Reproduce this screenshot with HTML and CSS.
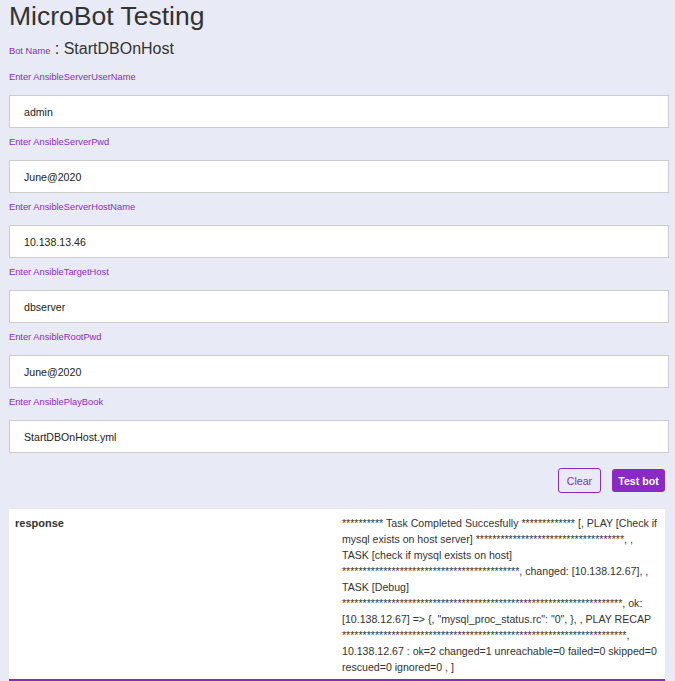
FILE: index.html
```html
<!DOCTYPE html>
<html lang="en">
<head>
<meta charset="utf-8">
<title>MicroBot Testing</title>
<link rel="stylesheet" href="styles.css">
</head>
<body>
<main class="page">
  <h1 class="title">MicroBot Testing</h1>
  <div class="bot-name"><span class="bot-name-label">Bot Name</span> : StartDBOnHost</div>

  <form class="form">
    <div class="field">
      <label class="field-label">Enter AnsibleServerUserName</label>
      <input class="field-input" type="text" value="admin">
    </div>
    <div class="field">
      <label class="field-label">Enter AnsibleServerPwd</label>
      <input class="field-input" type="text" value="June@2020">
    </div>
    <div class="field">
      <label class="field-label">Enter AnsibleServerHostName</label>
      <input class="field-input" type="text" value="10.138.13.46">
    </div>
    <div class="field">
      <label class="field-label">Enter AnsibleTargetHost</label>
      <input class="field-input" type="text" value="dbserver">
    </div>
    <div class="field">
      <label class="field-label">Enter AnsibleRootPwd</label>
      <input class="field-input" type="text" value="June@2020">
    </div>
    <div class="field">
      <label class="field-label">Enter AnsiblePlayBook</label>
      <input class="field-input" type="text" value="StartDBOnHost.yml">
    </div>

    <div class="actions">
      <button type="button" class="btn btn-outline">Clear</button>
      <button type="button" class="btn btn-primary">Test bot</button>
    </div>
  </form>

  <section class="result">
    <div class="result-key">response</div>
    <div class="result-value">********** Task Completed Succesfully ************* [, PLAY [Check if mysql exists on host server] ************************************, , TASK [check if mysql exists on host] *******************************************, changed: [10.138.12.67], , TASK [Debug] ********************************************************************, ok: [10.138.12.67] =&gt; {, "mysql_proc_status.rc": "0", }, , PLAY RECAP *********************************************************************, 10.138.12.67 : ok=2 changed=1 unreachable=0 failed=0 skipped=0 rescued=0 ignored=0 , ]</div>
  </section>
</main>
</body>
</html>
```

FILE: styles.css
```css
html, body {
  margin: 0;
  padding: 0;
}

body {
  background: #e8eaf6;
  font-family: "Liberation Sans", Arial, sans-serif;
  color: #333;
  height: 681px;
  overflow: hidden;
}

.page {
  padding: 1px 6px 0 9px;
}

.title {
  margin: 0;
  font-size: 26.5px;
  line-height: 30px;
  font-weight: normal;
  color: #333;
}

.bot-name {
  margin-top: 9px;
  font-size: 16px;
  line-height: 18px;
  color: #333;
}

.bot-name-label {
  font-size: 9.3px;
  color: #8a2ac4;
}

.form {
  margin: 11px 0 0;
}

.field {
  display: flex;
  flex-direction: column;
}

.field + .field .field-label {
  margin-top: 8px;
}

.field-label {
  font-size: 9.3px;
  line-height: 12px;
  color: #8a2ac4;
  margin-bottom: 12px;
}

.field-input {
  box-sizing: border-box;
  width: 660px;
  height: 33px;
  margin: 0;
  padding: 0 14px;
  border: 1px solid #cccccc;
  background: #fff;
  font-family: "Liberation Sans", Arial, sans-serif;
  font-size: 10.6px;
  color: #222;
  outline: none;
}

.actions {
  display: flex;
  justify-content: flex-end;
  align-items: center;
  gap: 11px;
  margin-top: 15px;
  padding-right: 4px;
  height: 25px;
}

.btn {
  box-sizing: border-box;
  font-family: "Liberation Sans", Arial, sans-serif;
  font-size: 10.6px;
  border-radius: 3px;
  cursor: pointer;
  margin: 0;
}

.btn-outline {
  height: 25px;
  width: 43px;
  padding: 0;
  border: 1px solid #8a2ac4;
  background: transparent;
  color: #8a2ac4;
}

.btn-primary {
  height: 23px;
  width: 53px;
  padding: 0;
  border: none;
  background: #8a2ac4;
  color: #fff;
  font-weight: bold;
}

.result {
  margin-top: 16px;
  width: 656px;
  background: #fff;
  border-bottom: 2px solid #8a2ac4;
  display: grid;
  grid-template-columns: 1fr 1fr;
}

.result-key,
.result-value {
  padding: 6px 4px 4px 5px;
  font-size: 10.6px;
  line-height: 16px;
  color: #333;
}

.result-key {
  padding-left: 6px;
  font-size: 11px;
  font-weight: bold;
}

.result-value {
  overflow-wrap: break-word;
}
```
